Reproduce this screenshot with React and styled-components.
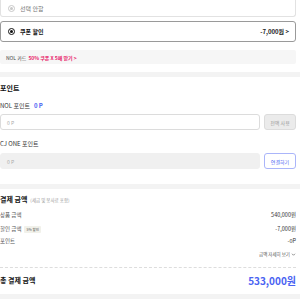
import React from 'react';
import styled, { createGlobalStyle } from 'styled-components';

const GlobalStyle = createGlobalStyle`
  html, body {
    margin: 0;
    padding: 0;
    background: #fff;
    font-family: "Noto Sans CJK KR", "Noto Sans", sans-serif;
    color: #222;
  }
`;

const Page = styled.div`
  width: 300px;
  overflow: hidden;
`;

const Section = styled.div`
  padding: 0 4px 0 0;
`;

const OptionBox = styled.div`
  display: flex;
  align-items: center;
  height: ${(p) => p.h}px;
  margin-top: ${(p) => p.mt || 0}px;
  padding: 0 6px 0 7px;
  border: 1px solid ${(p) => (p.active ? '#9a9a9a' : '#e2e2e2')};
  border-radius: 3px;
  box-sizing: border-box;
  font-size: 6px;
  color: ${(p) => (p.active ? '#111' : '#777')};
  font-weight: ${(p) => (p.active ? 700 : 400)};
`;

const Radio = styled.span`
  width: 7px;
  height: 7px;
  border-radius: 50%;
  border: 1px solid ${(p) => (p.active ? '#111' : '#c8c8c8')};
  box-sizing: border-box;
  display: flex;
  align-items: center;
  justify-content: center;
  margin-right: 5px;
  &::after {
    content: '';
    width: 3px;
    height: 3px;
    border-radius: 50%;
    background: ${(p) => (p.active ? '#111' : '#c8c8c8')};
  }
`;

const OptionPrice = styled.span`
  margin-left: auto;
  font-weight: 700;
  color: #222;
`;

const Banner = styled.div`
  margin-top: 8px;
  height: 14px;
  background: #f6f6f6;
  border-radius: 2px;
  display: flex;
  align-items: center;
  padding-left: 6px;
  font-size: 5px;
  color: #444;
  gap: 2px;
`;

const Pink = styled.span`
  color: #e8256b;
  font-weight: 700;
`;

const Band = styled.div`
  height: 5px;
  background: #f3f3f3;
  margin-top: ${(p) => p.mt}px;
`;

const Heading = styled.div`
  font-size: 7px;
  font-weight: 700;
  color: #111;
  margin-top: ${(p) => p.mt}px;
  display: flex;
  align-items: baseline;
  gap: 3px;
`;

const Note = styled.span`
  font-size: 4.5px;
  font-weight: 400;
  color: #999;
`;

const Label = styled.div`
  font-size: 6px;
  color: #333;
  margin-top: ${(p) => p.mt}px;
  display: flex;
  gap: 4px;
`;

const Blue = styled.span`
  color: #4a63f2;
  font-weight: 700;
`;

const InputRow = styled.div`
  display: flex;
  gap: 4px;
  margin-top: ${(p) => p.mt}px;
  height: 16px;
`;

const Field = styled.div`
  flex: 1;
  border: 1px solid ${(p) => (p.disabled ? '#f0f0f0' : '#dcdcdc')};
  background: ${(p) => (p.disabled ? '#f0f0f0' : '#fff')};
  border-radius: 3px;
  display: flex;
  align-items: center;
  padding-left: 6px;
  font-size: 5px;
  color: #aaa;
`;

const SideButton = styled.div`
  width: 32px;
  border-radius: 3px;
  box-sizing: border-box;
  display: flex;
  align-items: center;
  justify-content: center;
  font-size: 5px;
  border: 1px solid ${(p) => (p.primary ? '#aab5fa' : '#dcdcdc')};
  background: ${(p) => (p.primary ? '#fff' : '#ebebeb')};
  color: ${(p) => (p.primary ? '#4a63f2' : '#999')};
`;

const Row = styled.div`
  display: flex;
  justify-content: space-between;
  align-items: center;
  font-size: 5.5px;
  color: #555;
  height: 6px;
  margin-top: ${(p) => p.mt}px;
`;

const RowLeft = styled.span`
  display: flex;
  align-items: center;
  gap: 3px;
`;

const Badge = styled.span`
  font-size: 3.5px;
  background: #f1f1ea;
  color: #555;
  padding: 1px 2px;
  border-radius: 1px;
`;

const Amount = styled.span`
  color: #333;
`;

const More = styled.div`
  display: flex;
  justify-content: flex-end;
  align-items: center;
  gap: 1px;
  font-size: 4.5px;
  color: #555;
  margin-top: 7px;
`;

const Dashed = styled.div`
  border-top: 1px dashed #ddd;
  margin-top: 10px;
`;

const TotalRow = styled.div`
  display: flex;
  justify-content: space-between;
  align-items: center;
  margin-top: 6px;
  height: 12px;
`;

const TotalLabel = styled.span`
  font-size: 7px;
  font-weight: 700;
  color: #111;
`;

const TotalValue = styled.span`
  font-size: 10px;
  font-weight: 700;
  color: #4a63f2;
`;

export default function App() {
  return (
    <Page>
      <GlobalStyle />
      <Section>
        <OptionBox h={17} style={{ borderTop: 'none', borderRadius: '0 0 3px 3px' }}>
          <Radio />
          선택 안함
        </OptionBox>
        <OptionBox h={21} mt={4} active>
          <Radio active />
          쿠폰 할인
          <OptionPrice>-7,000원 &gt;</OptionPrice>
        </OptionBox>
        <Banner>
          NOL 카드 <Pink>50% 쿠폰 X 5매 받기 &gt;</Pink>
        </Banner>
      </Section>
      <Band mt={8} />
      <Section>
        <Heading mt={6}>포인트</Heading>
        <Label mt={8}>
          NOL 포인트 <Blue>0 P</Blue>
        </Label>
        <InputRow mt={4}>
          <Field>0 P</Field>
          <SideButton>전액 사용</SideButton>
        </InputRow>
        <Label mt={9}>CJ ONE 포인트</Label>
        <InputRow mt={5}>
          <Field disabled>0 P</Field>
          <SideButton primary>연결하기</SideButton>
        </InputRow>
      </Section>
      <Band mt={15} />
      <Section>
        <Heading mt={5}>
          결제 금액 <Note>(세금 및 봉사료 포함)</Note>
        </Heading>
        <Row mt={8}>
          <span>상품 금액</span>
          <Amount>540,000원</Amount>
        </Row>
        <Row mt={8}>
          <RowLeft>
            할인 금액 <Badge>5% 할인</Badge>
          </RowLeft>
          <Amount>-7,000원</Amount>
        </Row>
        <Row mt={6}>
          <span>포인트</span>
          <Amount>-0P</Amount>
        </Row>
        <More>
          금액 자세히 보기
          <svg width="5" height="5" viewBox="0 0 10 10">
            <path d="M2 3.5 L5 6.5 L8 3.5" fill="none" stroke="#555" strokeWidth="1.3" />
          </svg>
        </More>
        <Dashed />
        <TotalRow>
          <TotalLabel>총 결제 금액</TotalLabel>
          <TotalValue>533,000원</TotalValue>
        </TotalRow>
      </Section>
      <Band mt={8} />
    </Page>
  );
}
